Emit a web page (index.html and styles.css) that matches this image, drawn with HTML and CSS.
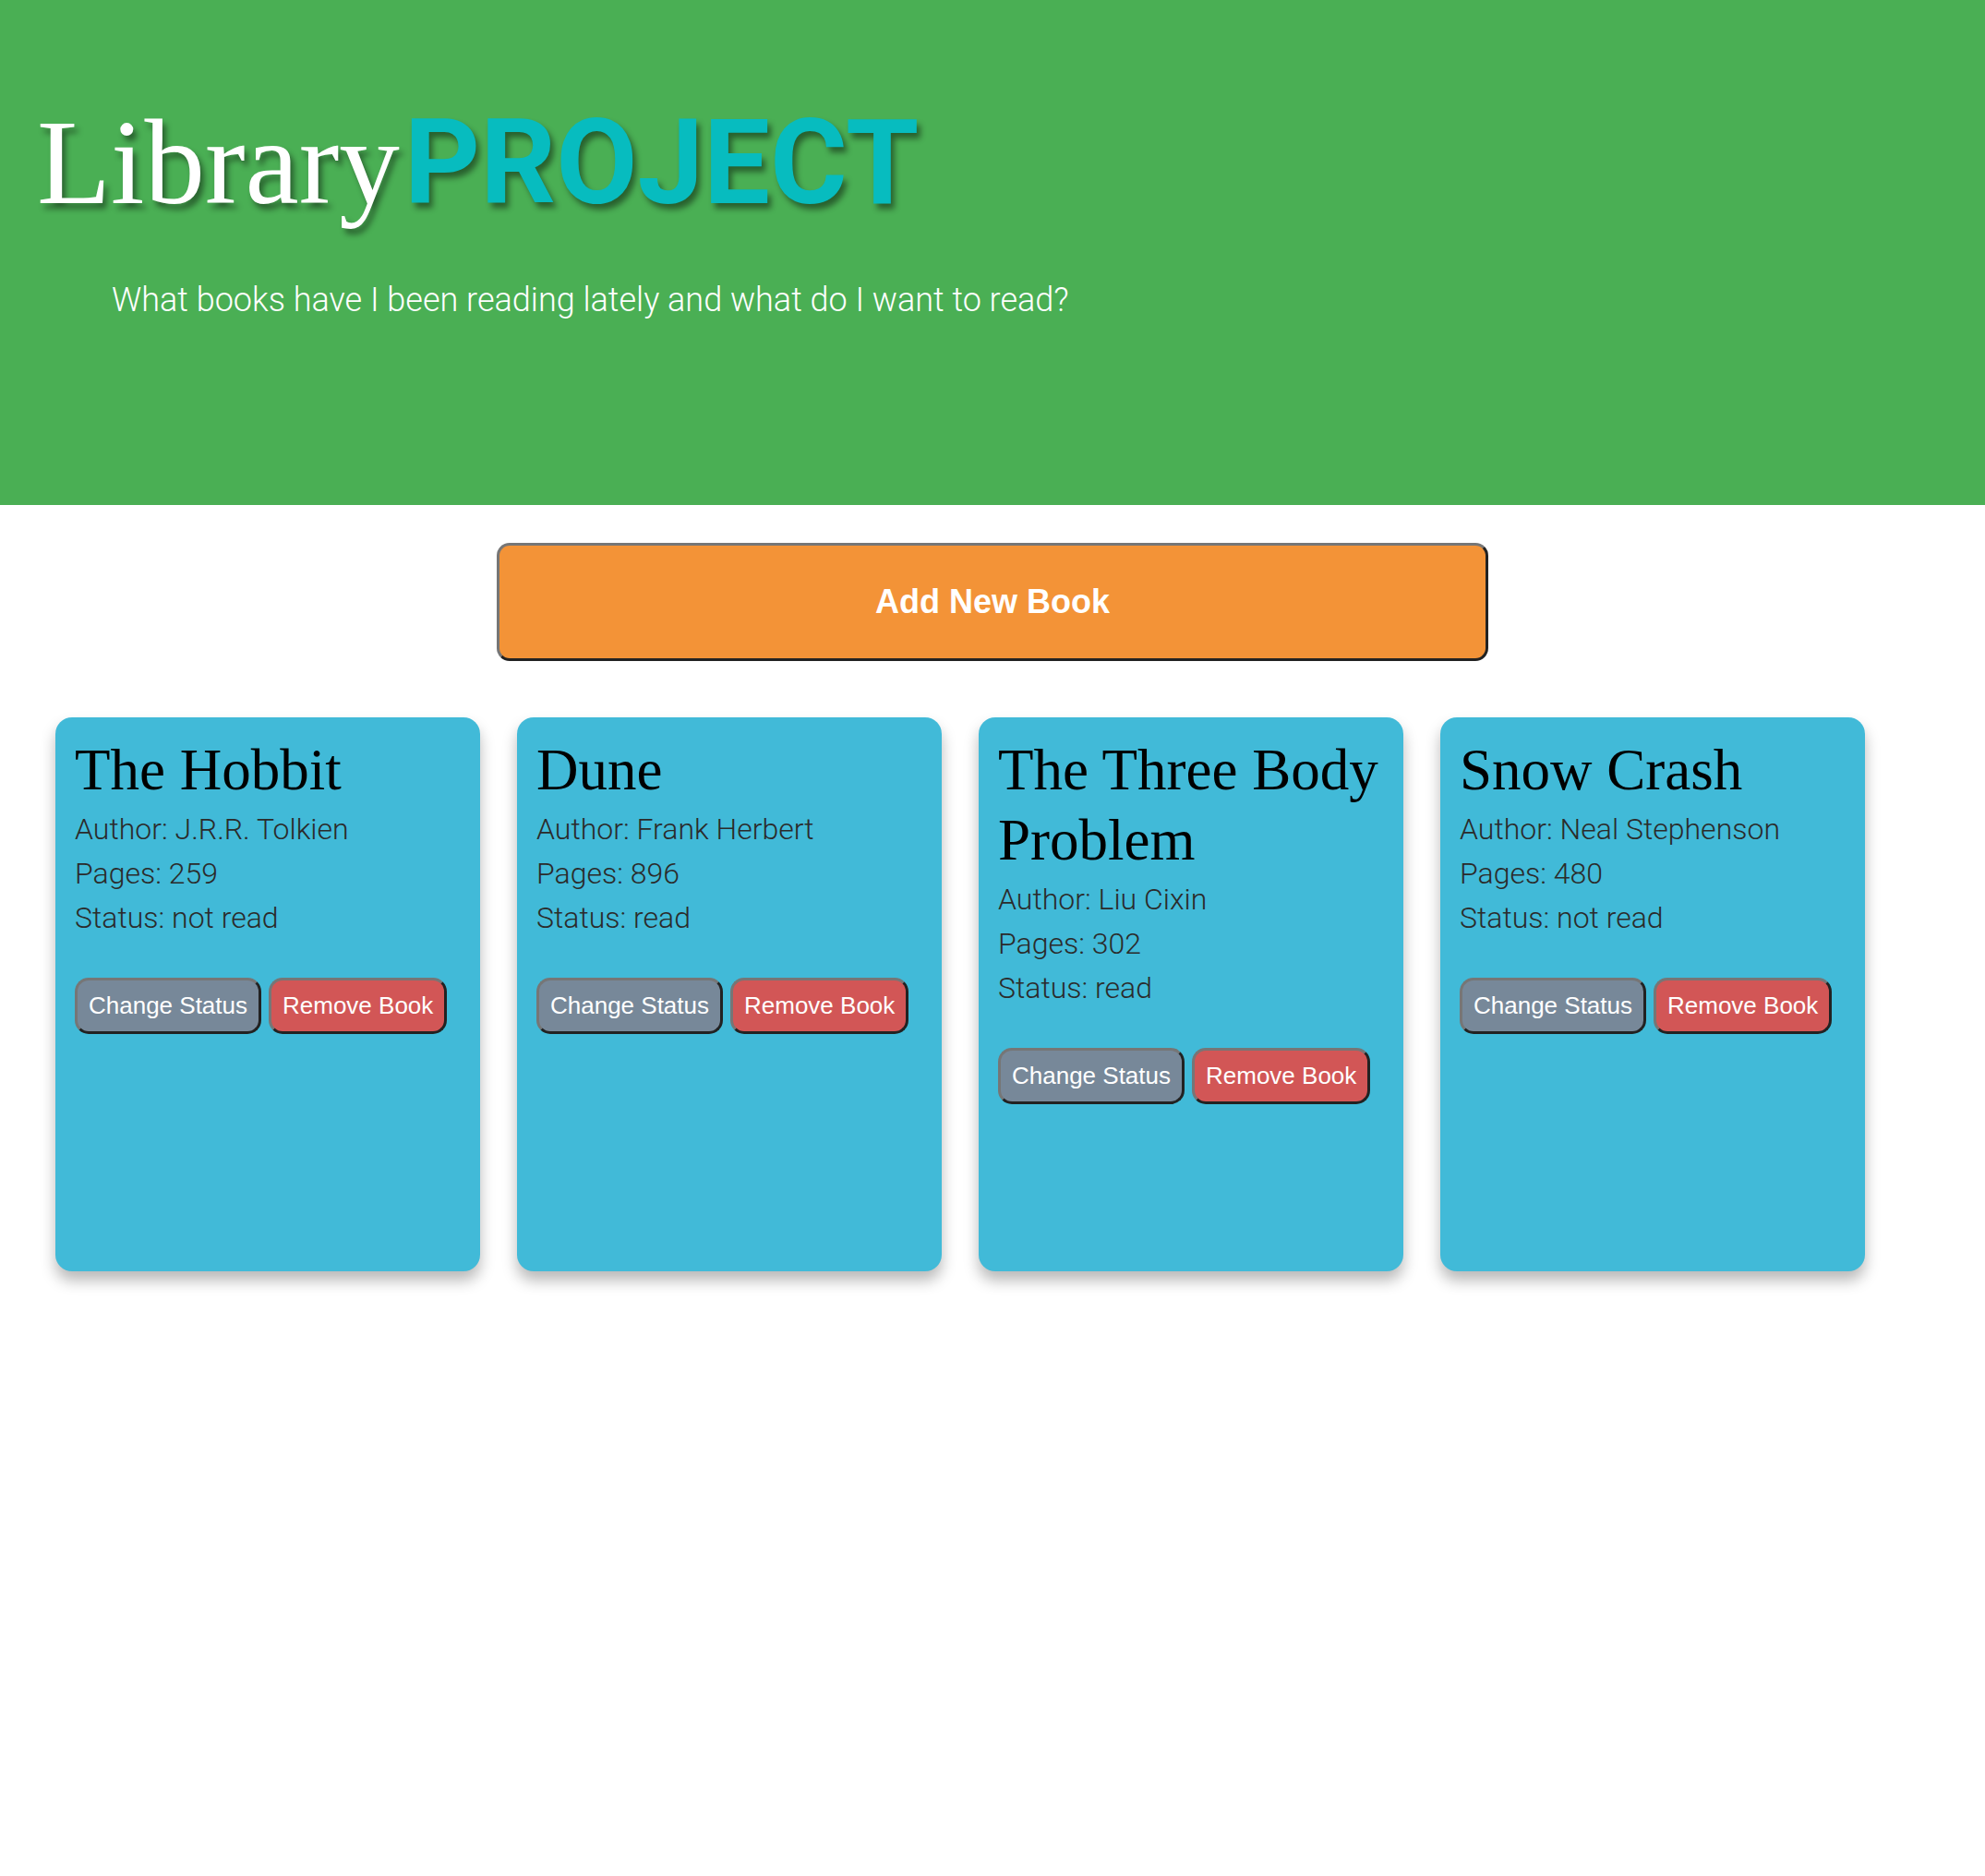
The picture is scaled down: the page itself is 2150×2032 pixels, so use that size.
FILE: index.html
```html
<!DOCTYPE html>
<html lang="en">
<head>
<meta charset="utf-8">
<title>Library Project</title>
<link rel="stylesheet" href="styles.css">
</head>
<body>
<header class="hero">
  <h1 class="brand"><span class="brand-lib">Library</span><span class="brand-proj">PROJECT</span></h1>
  <p class="tagline">What books have I been reading lately and what do I want to read?</p>
</header>
<main class="main">
  <div class="add-row">
    <button class="add-btn">Add New Book</button>
  </div>
  <section class="shelf">
    <article class="card">
      <h2 class="card-title">The Hobbit</h2>
      <p class="card-line">Author: J.R.R. Tolkien</p>
      <p class="card-line">Pages: 259</p>
      <p class="card-line">Status: not read</p>
      <div class="card-actions">
        <button class="btn btn-status">Change Status</button>
        <button class="btn btn-remove">Remove Book</button>
      </div>
    </article>
    <article class="card">
      <h2 class="card-title">Dune</h2>
      <p class="card-line">Author: Frank Herbert</p>
      <p class="card-line">Pages: 896</p>
      <p class="card-line">Status: read</p>
      <div class="card-actions">
        <button class="btn btn-status">Change Status</button>
        <button class="btn btn-remove">Remove Book</button>
      </div>
    </article>
    <article class="card">
      <h2 class="card-title">The Three Body Problem</h2>
      <p class="card-line">Author: Liu Cixin</p>
      <p class="card-line">Pages: 302</p>
      <p class="card-line">Status: read</p>
      <div class="card-actions">
        <button class="btn btn-status">Change Status</button>
        <button class="btn btn-remove">Remove Book</button>
      </div>
    </article>
    <article class="card">
      <h2 class="card-title">Snow Crash</h2>
      <p class="card-line">Author: Neal Stephenson</p>
      <p class="card-line">Pages: 480</p>
      <p class="card-line">Status: not read</p>
      <div class="card-actions">
        <button class="btn btn-status">Change Status</button>
        <button class="btn btn-remove">Remove Book</button>
      </div>
    </article>
  </section>
</main>
</body>
</html>
```

FILE: styles.css
```css
* { box-sizing: border-box; }

body {
  margin: 0;
  background: #ffffff;
  font-family: Roboto, "Liberation Sans", sans-serif;
}

.hero {
  background: #4aaf54;
  height: 547px;
  padding: 100px 40px 0 40px;
}

.brand {
  margin: 0;
  font-weight: normal;
  line-height: normal;
  white-space: nowrap;
}

.brand-lib {
  font-family: "Liberation Serif", serif;
  font-size: 131px;
  color: #ffffff;
  text-shadow: 4px 6px 6px rgba(0, 0, 0, 0.45);
  margin-right: 5px;
}

.brand-proj {
  font-family: Roboto, "Liberation Sans", sans-serif;
  font-weight: 700;
  font-size: 128px;
  color: #07bcbf;
  text-shadow: 4px 6px 6px rgba(0, 0, 0, 0.45);
}

.tagline {
  margin: 53px 0 0 81px;
  font-family: Roboto, sans-serif;
  font-weight: 300;
  font-size: 36px;
  color: #ffffff;
}

.main {
  padding: 41px 60px 60px 60px;
}

.add-row {
  display: flex;
  justify-content: center;
}

.add-btn {
  width: 1074px;
  padding: 40px 0;
  background: #f39337;
  color: #ffffff;
  font-family: "Liberation Sans", Arial, sans-serif;
  font-weight: 700;
  font-size: 36px;
  border: 3px solid;
  border-color: #767676 #222222 #222222 #767676;
  border-radius: 14px;
}

.shelf {
  margin-top: 61px;
  display: grid;
  grid-template-columns: repeat(4, 460px);
  gap: 40px;
}

.card {
  height: 600px;
  background: #41bad8;
  border-radius: 18px;
  padding: 19px 20px 20px 21px;
  box-shadow: 0 10px 16px rgba(0, 0, 0, 0.28);
}

.card-title {
  margin: 0 0 2px 0;
  font-family: "Liberation Serif", serif;
  font-weight: normal;
  font-size: 63px;
  line-height: 76px;
  color: #000000;
}

.card-line {
  margin: 0;
  font-family: Roboto, sans-serif;
  font-weight: 300;
  font-size: 32px;
  line-height: 48px;
  color: #2b2b2b;
}

.card-actions {
  margin-top: 41px;
  display: flex;
  gap: 8px;
}

.btn {
  font-family: "Liberation Sans", Arial, sans-serif;
  font-size: 26px;
  color: #ffffff;
  padding: 12px 12px;
  border: 3px solid;
  border-color: #767676 #222222 #222222 #767676;
  border-radius: 15px;
}

.btn-status { background: #778899; }
.btn-remove { background: #d25656; }
```
